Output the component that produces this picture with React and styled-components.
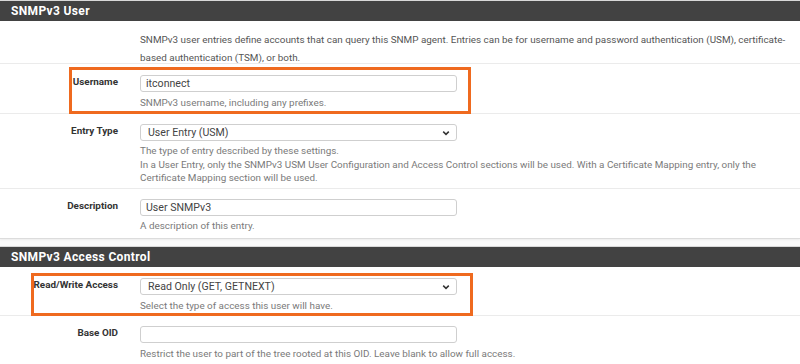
import React from 'react';
import styled, { createGlobalStyle } from 'styled-components';

const GlobalStyle = createGlobalStyle`
  html, body {
    margin: 0;
    padding: 0;
    background: #fafafa;
    font-family: Roboto, "Liberation Sans", Arial, sans-serif;
  }
`;

const Page = styled.div`
  width: 800px;
  height: 364px;
  overflow: hidden;
  display: flex;
  flex-direction: column;
  gap: 7px;
`;

const Panel = styled.section`
  background: #fff;
  border-bottom: 1px solid #dcdcdc;
  box-shadow: 0 1px 2px rgba(0, 0, 0, 0.06);
`;

const PanelHeading = styled.h2`
  margin: 0;
  height: 20px;
  background: #424242;
  border-top: 1px solid #d8d8d8;
  color: #fff;
  font-size: 12px;
  font-weight: 700;
  letter-spacing: 0.35px;
  display: flex;
  align-items: center;
  padding-left: 11px;
`;

const Row = styled.div`
  display: grid;
  grid-template-columns: 118px 1fr;
  column-gap: 22px;
  height: ${p => p.$h}px;
  box-sizing: border-box;
  padding-top: ${p => p.$pt}px;
  border-bottom: 1px solid #ebebeb;
  position: relative;

  &:last-child {
    border-bottom: none;
  }
`;

const Highlight = styled.div`
  position: absolute;
  left: ${p => p.$left}px;
  top: ${p => p.$top}px;
  width: ${p => p.$w}px;
  height: ${p => p.$hh}px;
  border: 3px solid #ef6a1f;
  box-sizing: border-box;
  pointer-events: none;
`;

const Label = styled.div`
  text-align: right;
  font-size: 9.9px;
  line-height: 12px;
  font-weight: 700;
  color: #333;
  padding-top: 1px;
`;

const Field = styled.div`
  display: flex;
  flex-direction: column;
  width: 648px;
`;

const Input = styled.div`
  width: 317px;
  height: 17px;
  box-sizing: border-box;
  border: 1px solid #cfcfcf;
  border-radius: 3px;
  background: #fff;
  font-size: 10.6px;
  color: #444;
  display: flex;
  align-items: center;
  justify-content: space-between;
  padding: 0 6px 0 ${p => p.$pl || 5}px;
`;

const Help = styled.div`
  font-size: 9.9px;
  line-height: 13.6px;
  color: #7a7a7a;
  margin-top: ${p => p.$mt || 4}px;
`;

const Intro = styled.div`
  font-size: 9.9px;
  line-height: 18px;
  color: #555;
`;

const Chevron = () => (
  <svg width="8" height="6" viewBox="0 0 8 6">
    <path d="M1.2 1.6 L4 4.4 L6.8 1.6" fill="none" stroke="#333" strokeWidth="1.5" />
  </svg>
);

export default function App() {
  return (
    <Page>
      <GlobalStyle />
      <Panel>
        <PanelHeading>SNMPv3 User</PanelHeading>
        <Row $h={43} $pt={10}>
          <div />
          <Intro>
            SNMPv3 user entries define accounts that can query this SNMP agent. Entries can be for username and password authentication (USM), certificate-based authentication (TSM), or both.
          </Intro>
        </Row>
        <Row $h={50} $pt={11}>
          <Highlight $left={69} $top={3} $w={402} $hh={47} />
          <Label>Username</Label>
          <Field>
            <Input>itconnect</Input>
            <Help $mt={4}>SNMPv3 username, including any prefixes.</Help>
          </Field>
        </Row>
        <Row $h={75} $pt={10}>
          <Label>Entry Type</Label>
          <Field>
            <Input $pl={7}>User Entry (USM)<Chevron /></Input>
            <Help $mt={3}>
              The type of entry described by these settings.
              <br />
              In a User Entry, only the SNMPv3 USM User Configuration and Access Control sections will be used. With a Certificate Mapping entry, only the Certificate Mapping section will be used.
            </Help>
          </Field>
        </Row>
        <Row $h={49} $pt={10}>
          <Label>Description</Label>
          <Field>
            <Input>User SNMPv3</Input>
            <Help $mt={3}>A description of this entry.</Help>
          </Field>
        </Row>
      </Panel>
      <Panel>
        <PanelHeading>SNMPv3 Access Control</PanelHeading>
        <Row $h={49} $pt={11}>
          <Highlight $left={31} $top={6} $w={442} $hh={43} />
          <Label>Read/Write Access</Label>
          <Field>
            <Input $pl={7}>Read Only (GET, GETNEXT)<Chevron /></Input>
            <Help $mt={4}>Select the type of access this user will have.</Help>
          </Field>
        </Row>
        <Row $h={49} $pt={10}>
          <Label>Base OID</Label>
          <Field>
            <Input />
            <Help $mt={4}>Restrict the user to part of the tree rooted at this OID. Leave blank to allow full access.</Help>
          </Field>
        </Row>
      </Panel>
    </Page>
  );
}
